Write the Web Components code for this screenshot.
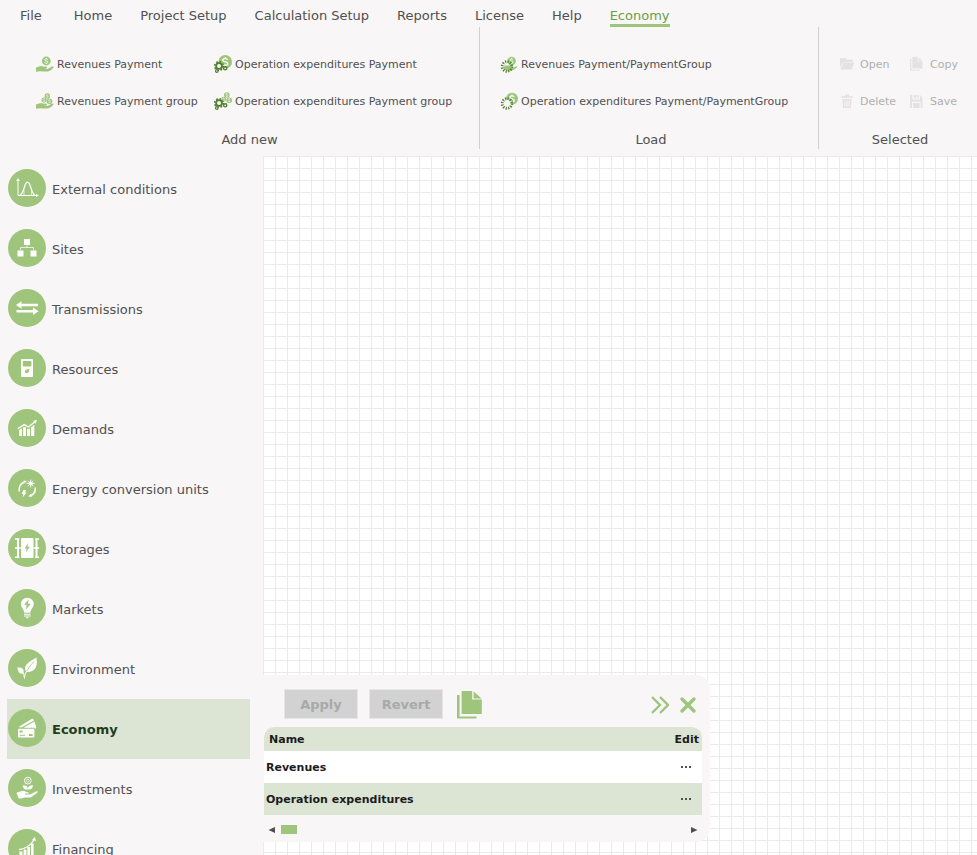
<!DOCTYPE html>
<html lang="en">
<head>
<meta charset="utf-8">
<meta name="viewport" content="width=device-width, initial-scale=1">
<title>Economy</title>
<style>
  :root {
    --bg: #f8f6f7;
    --green: #9fc57c;
    --dark-green: #4f7f2b;
    --pale-green: #dce5d3;
    --text: #505050;
    --line: #cfcfcf;
  }
  body {
    margin: 0;
    height: 100vh;
    display: flex;
    flex-direction: column;
    overflow: hidden;
    background: var(--bg);
    color: var(--text);
    font: 13px/18px Verdana, "DejaVu Sans", sans-serif;
  }
  header {
    flex: none;
    padding-bottom: 7px;
  }
  main {
    flex: 1;
    min-height: 0;
    display: flex;
  }
</style>
</head>
<body>
  <header>
    <menu-bar>
      <menu-item>File</menu-item>
      <menu-item>Home</menu-item>
      <menu-item>Project Setup</menu-item>
      <menu-item>Calculation Setup</menu-item>
      <menu-item>Reports</menu-item>
      <menu-item>License</menu-item>
      <menu-item>Help</menu-item>
      <menu-item active>Economy</menu-item>
    </menu-bar>
    <ribbon-bar>
      <ribbon-group caption="Add new" style="flex-grow: 459; --columns: 178px 1fr">
        <ribbon-button icon="revenue">Revenues Payment</ribbon-button>
        <ribbon-button icon="expense">Operation expenditures Payment</ribbon-button>
        <ribbon-button icon="revenue-group">Revenues Payment group</ribbon-button>
        <ribbon-button icon="expense-group">Operation expenditures Payment group</ribbon-button>
      </ribbon-group>
      <ribbon-group caption="Load" style="flex-grow: 334; --columns: 1fr">
        <ribbon-button icon="load-revenue">Revenues Payment/PaymentGroup</ribbon-button>
        <ribbon-button icon="load-expense">Operation expenditures Payment/PaymentGroup</ribbon-button>
      </ribbon-group>
      <ribbon-group caption="Selected" style="flex-grow: 154; --columns: 70px 1fr">
        <ribbon-button icon="open" disabled>Open</ribbon-button>
        <ribbon-button icon="copy" disabled>Copy</ribbon-button>
        <ribbon-button icon="delete" disabled>Delete</ribbon-button>
        <ribbon-button icon="save" disabled>Save</ribbon-button>
      </ribbon-group>
    </ribbon-bar>
  </header>
  <main>
    <side-nav>
      <nav-item icon="conditions">External conditions</nav-item>
      <nav-item icon="sites">Sites</nav-item>
      <nav-item icon="transmissions">Transmissions</nav-item>
      <nav-item icon="resources">Resources</nav-item>
      <nav-item icon="demands">Demands</nav-item>
      <nav-item icon="conversion">Energy conversion units</nav-item>
      <nav-item icon="storages">Storages</nav-item>
      <nav-item icon="markets">Markets</nav-item>
      <nav-item icon="environment">Environment</nav-item>
      <nav-item icon="economy" active>Economy</nav-item>
      <nav-item icon="investments">Investments</nav-item>
      <nav-item icon="financing">Financing</nav-item>
    </side-nav>
    <grid-canvas>
      <payment-panel></payment-panel>
    </grid-canvas>
  </main>

<script>
  const hand = 'M0 12.5 L3 11.5 Q5 10.6 7 11.5 L10.5 11.8 Q11.8 12.6 10.5 13.4 L7.5 13.6 L11.5 14 L16 11.6 Q17.8 11 17.8 12.2 Q16 15 12 16.6 H7 Q4 15.6 0 16.8Z';

  // round coin with a currency mark, sized by its radius
  const coin = (x, y, r) => `
    <g transform="translate(${x} ${y}) scale(${r / 6})">
      <circle r="6" fill="#9fc57c"/>
      <path d="M2.2 -1.9 Q1.6 -2.9 0 -2.9 Q-2.1 -2.9 -2.1 -1.5 Q-2.1 -.3 0 0 Q2.2 .3 2.2 1.6 Q2.2 3 0 3 Q-1.8 3 -2.3 1.9 M0 -4.3 V-2.9 M0 3 V4.3" fill="none" stroke="#fff" stroke-width="1.2"/>
    </g>`;

  const gears = `
    <g fill="none" stroke="#4f7f2b">
      <circle cx="5" cy="11" r="4.3" stroke-width="1.6" stroke-dasharray="1.7 1.67"/>
      <circle cx="5" cy="11" r="2.9" stroke-width="1.8" fill="#f8f6f7"/>
      <circle cx="11.2" cy="13.3" r="1.6" stroke-width="1.4" fill="#f8f6f7"/>
      <circle cx="2.8" cy="16" r="1.3" stroke-width="1.2" fill="#f8f6f7"/>
    </g>`;

  const spinner = '<circle cx="7" cy="11.5" r="4.8" fill="none" stroke="#4f7f2b" stroke-width="2.8" stroke-dasharray="1.2 1.31"/>';

  const page = `
    <path d="M0 4 H2.6 V25.4 H19.5 V27.4 H0Z"/>
    <path d="M4.6 0 H15.2 V8.6 H24.8 V23 H4.6Z"/>
    <path d="M16.6 .4 L24.6 7.4 H16.6Z"/>`;

  const ICONS = {
    'revenue': [18, 18, `<path d="${hand}" fill="#9fc57c"/>${coin(10.3, 6, 4.4)}`],
    'revenue-group': [18, 18, `<path d="${hand}" fill="#9fc57c"/>${coin(11.3, 4, 2.7)}${coin(8, 8, 2.5)}${coin(13.4, 9.2, 2.8)}`],
    'expense': [18, 18, coin(11.2, 6.9, 6.8) + gears],
    'expense-group': [18, 18, coin(12.8, 3, 2.8) + coin(9.8, 7.2, 2.4) + coin(15.2, 8.2, 2.8) + gears],
    'load-revenue': [18, 18, `${coin(11.6, 6, 4.2)}<path d="M4.5 10.5 H10 L12 13 L17.5 11 Q16.8 13.8 12 15.5 L8 16 L3.5 14Z" fill="#9fc57c"/>${spinner}`],
    'load-expense': [18, 18, `${coin(12, 6.8, 6)}<circle cx="7" cy="11.5" r="4.4" fill="#f8f6f7"/>${spinner}`],
    'open': [18, 18, '<path d="M1 4 Q1 3 2 3 H6.5 L8 4.8 H13 Q14 4.8 14 5.8 V7 H4.5 L1 12.5Z M4.6 7.6 H15.4 L12.8 14.6 H1.4Z"/>'],
    'copy': [18, 18, `<g transform="translate(1 2) scale(.5)">${page}</g>`],
    'delete': [18, 18, '<path d="M2.5 4 H6 V2.5 H10 V4 H13.5 V5.8 H2.5Z M3.3 7 H12.7 L12 16 H4Z"/><path d="M5.8 8.5 V14.5 M8 8.5 V14.5 M10.2 8.5 V14.5" stroke="#f8f6f7" stroke-width="1"/>'],
    'save': [18, 18, '<path d="M1 3 H3.5 V7.5 H11 V3 L13.5 5.5 V16 H11.6 V9.8 H3 V16 H1Z M5 3 H7.5 V6.2 H5Z M8.6 3 H10 V6.2 H8.6Z M4 11 H10.6 V16 H4Z"/>'],
    'page': [26, 28, page],
    'chevrons': [18, 18, '<path d="M1 1 L9 9 L1 17 M9 1 L17 9 L9 17" fill="none" stroke="#9fc57c" stroke-width="2.4"/>'],
    'close': [18, 18, '<path d="M3 3 L15 15 M15 3 L3 15" fill="none" stroke="#9fc57c" stroke-width="3.4" stroke-linecap="round"/>'],
    'dots': [12, 4, '<path d="M1 1 H3 V3 H1Z M5 1 H7 V3 H5Z M9 1 H11 V3 H9Z" fill="#505050"/>'],
    'left': [8, 8, '<path d="M7 1 V7 L.5 4Z" fill="#505050"/>'],
    'right': [8, 8, '<path d="M1 1 V7 L7.5 4Z" fill="#505050"/>'],
    'conditions': [38, 38, '<g fill="none" stroke="#fff"><path d="M10 12 V26.5 H29" stroke-width="1"/><path d="M11.5 26.5 C16.5 25 16 13.2 19.5 13.2 S22.8 25 27.5 26.5" stroke-width="1.3"/><path d="M16 21 V26 M23.5 21 V26" stroke-width=".7"/></g><path d="M10 9 L11.8 12 H8.2Z M31 26.5 L28 24.9 V28.1Z" fill="#fff"/>'],
    'sites': [38, 38, '<path d="M16 10 H22 V16 H16Z M9.5 21.5 H15.5 V27.5 H9.5Z M22.5 21.5 H28.5 V27.5 H22.5Z" fill="#fff"/><path d="M19 16 V18.5 M12.5 21 V18.5 H25.5 V21" fill="none" stroke="#fff" stroke-width=".7"/>'],
    'transmissions': [38, 38, '<path d="M8 16 L13.5 12.2 V14.8 H30 V17.2 H13.5 V19.8Z M30.5 22.2 L25 18.4 V21 H8.5 V23.4 H25 V26Z" fill="#fff"/>'],
    'resources': [38, 38, '<rect x="13" y="10" width="12" height="18" rx="1" fill="#fff"/><rect x="14.8" y="12" width="8.6" height="5.4" rx="1" fill="#9fc57c"/><path d="M21.3 20 Q17 20 17 22.6 Q17 24.4 18.8 24.2 Q21.3 24 21.3 20Z M16.6 24.6 L19 22.4" fill="#9fc57c"/>'],
    'demands': [38, 38, '<path d="M11 21 L14 19.2 V27 H11Z M15 18.6 L16.5 17.8 L18 18.8 V27 H15Z M19 19.4 L20.4 20.2 L22 19.2 V27 H19Z M23 18.4 L26.3 15.8 V27 H23Z" fill="#fff"/><path d="M9.8 19.6 L16.3 15.6 L20.4 18 L27 12.8" fill="none" stroke="#fff" stroke-width="1.3"/><path d="M28.8 11 L27.8 14.6 L25.2 11.8Z" fill="#fff"/>'],
    'conversion': [38, 38, '<g fill="none" stroke="#fff"><path d="M11.2 22.5 Q10.4 15.5 16.2 13" stroke-width="1.5"/><path d="M27.2 18.5 Q28 24.5 22.5 26.8" stroke-width="1.5"/><path d="M22.7 10.6 V18.4 M18.8 14.5 H26.6 M20 11.8 L25.4 17.2 M25.4 11.8 L20 17.2" stroke-width=".8"/></g><circle cx="22.7" cy="14.5" r="2.1" fill="#fff"/><path d="M18.8 12 L15.6 11.4 L16.8 14.6Z M20.2 27.4 L23 24.8 L24 27.8Z M15.4 21 H18.2 L17 23.6 H18.6 L14.6 28.4 L15.4 25 H13.6Z" fill="#fff"/>'],
    'storages': [38, 38, '<rect x="13" y="9" width="12.5" height="20" rx="1" fill="#fff"/><g fill="none" stroke="#fff"><path d="M7 10 H11.4 M7 19 H13 M7 28.2 H11.4 M31 10 H27.2 M31 19 H25.5 M31 28.2 H27.2" stroke-width="1.6"/><path d="M10 10 V28.4 M28.5 10 V28.4" stroke-width="2"/></g><path d="M20.4 13.8 L16.6 19.4 H18.8 L17.8 23.4 L21.8 17.8 H19.5Z" fill="#9fc57c"/>'],
    'markets': [38, 38, '<path d="M19.3 8.7 A6.4 6.4 0 0 1 25.7 15.1 C25.7 18.6 22.6 20 22.4 23.8 H16.2 C16 20 12.9 18.6 12.9 15.1 A6.4 6.4 0 0 1 19.3 8.7Z" fill="#fff"/><path d="M16 25.2 H22.6 M16 27 H22.6 M18 28.8 H20.6" stroke="#fff" stroke-width="1.1"/><path d="M20.6 10.6 L16 15.8 H18.6 L18 20.4 L22.8 14.8 H20Z" fill="#9fc57c"/>'],
    'environment': [38, 38, '<path d="M28.4 8.6 Q29.6 15.8 27.2 19.6 Q24.6 23.4 18.2 23 Q15.6 18.4 19.4 14.4 Q22.6 11.6 28.4 8.6Z M9.2 18.6 Q13.6 18.4 15 20 Q16.2 21.8 15.6 24.6 Q11.6 25.2 10.6 22.8Z" fill="#fff"/><path d="M26 12.4 Q22 16.6 18.6 22.2" fill="none" stroke="#9fc57c" stroke-width=".8"/><path d="M13 21.4 Q16.6 25 16.6 29.6 M18.8 22 Q16.6 25 16.6 28" fill="none" stroke="#fff" stroke-width="1"/>'],
    'economy': [38, 38, '<path d="M10.6 18 L24 9.8 Q25 9.4 25.4 10.4 L26 11.6 L13.4 18.4Z M15.4 18.8 L26.6 12.4 L28.2 18 Q28.4 19.2 27.4 19.8 L27 20 Q26.8 18.8 25.8 18.8Z" fill="#fff"/><rect x="10" y="19.8" width="16.4" height="8.8" rx="1" fill="#fff"/><path d="M11.6 21.4 H14.6 V23.4 H11.6Z M11.6 25.8 H17 V26.8 H11.6Z M21 25 H24.6 V27 H21Z" fill="#9fc57c"/>'],
    'investments': [38, 38, '<circle cx="19.8" cy="11.6" r="3.4" fill="none" stroke="#fff" stroke-width=".9"/><circle cx="19.8" cy="11.6" r="1.5" fill="none" stroke="#fff" stroke-width=".7"/><path d="M14.6 16.4 Q18.8 16 19.8 19.4 Q20.8 16 25 16.4 Q24.6 20.6 19.8 20.6 Q15 20.6 14.6 16.4Z M8.4 23.8 L12 22.6 L15.6 21.8 L19.2 23.2 Q21 23.2 21 24.6 H17 V25.4 H22 L28 22.4 Q30 22 29.6 23.6 L22.6 28.4 H16.6 L13.6 29.4 H10.8Z" fill="#fff"/>'],
    'financing': [38, 38, '<path d="M11.4 22.4 H14.4 V32 H11.4Z M15.6 20.6 H18.4 V32 H15.6Z M19.4 18 H22 V32 H19.4Z M23 14.6 H25.6 V32 H23Z" fill="#fff"/><path d="M11 20.6 Q22 18.6 26 10.4" fill="none" stroke="#fff" stroke-width="1.2"/><path d="M26.8 8 L28 12 L24 11Z" fill="#fff"/>']
  };

  class AppIcon extends HTMLElement {
    constructor() {
      super();
      this.attachShadow({mode: 'open'});
    }

    connectedCallback() {
      const [width, height, shape] = ICONS[this.getAttribute('name')];
      this.shadowRoot.innerHTML = `
        <style>
          :host { display: block; flex: none; color: var(--green); }
          svg { display: block; }
        </style>
        <svg width="${width}" height="${height}" viewBox="0 0 ${width} ${height}" fill="currentColor" aria-hidden="true">${shape}</svg>
      `;
    }
  }
  customElements.define('app-icon', AppIcon);

  class MenuBar extends HTMLElement {
    constructor() {
      super();
      this.attachShadow({mode: 'open'}).innerHTML = `
        <style>
          :host { display: block; padding: 0 20px; }
          nav { display: flex; gap: 28px; }
        </style>
        <nav aria-label="Main menu"><slot></slot></nav>
      `;
    }
  }
  customElements.define('menu-bar', MenuBar);

  class MenuItem extends HTMLElement {
    constructor() {
      super();
      this.attachShadow({mode: 'open'}).innerHTML = `
        <style>
          :host { display: block; }
          :host(:first-child) { margin-right: 4px; }
          a {
            display: block;
            padding-top: 8px;
            border-bottom: 3px solid transparent;
            color: inherit;
            line-height: 16px;
            text-decoration: none;
            white-space: nowrap;
          }
          :host([active]) a { color: #6ba03e; border-color: var(--green); }
        </style>
        <a href="#"><slot></slot></a>
      `;
    }
  }
  customElements.define('menu-item', MenuItem);

  class RibbonBar extends HTMLElement {
    constructor() {
      super();
      this.attachShadow({mode: 'open'}).innerHTML = `
        <style>
          :host { display: flex; padding-left: 16px; }
          ::slotted(ribbon-group:not(:last-child)) { border-right: 1px solid var(--line); }
        </style>
        <slot></slot>
      `;
    }
  }
  customElements.define('ribbon-bar', RibbonBar);

  class RibbonGroup extends HTMLElement {
    constructor() {
      super();
      this.attachShadow({mode: 'open'});
    }

    connectedCallback() {
      this.shadowRoot.innerHTML = `
        <style>
          :host {
            display: block;
            box-sizing: border-box;
            flex: 1 1 0;
            min-width: 0;
            padding-left: 4px;
          }
          .buttons {
            display: grid;
            grid-template-columns: var(--columns);
            grid-auto-rows: 37px;
            align-items: center;
            padding: 18px 0 0 16px;
          }
          .caption { padding-top: 12px; text-align: center; }
        </style>
        <div class="buttons"><slot></slot></div>
        <div class="caption">${this.getAttribute('caption')}</div>
      `;
    }
  }
  customElements.define('ribbon-group', RibbonGroup);

  class RibbonButton extends HTMLElement {
    constructor() {
      super();
      this.attachShadow({mode: 'open'});
    }

    connectedCallback() {
      const disabled = this.hasAttribute('disabled');
      this.shadowRoot.innerHTML = `
        <style>
          :host { display: block; min-width: 0; }
          button {
            display: flex;
            align-items: center;
            gap: 3px;
            padding: 0;
            border: 0;
            background: none;
            color: inherit;
            font: inherit;
            font-size: 11px;
            white-space: nowrap;
            cursor: pointer;
          }
          span { padding-top: 2px; }
          button:disabled { color: #b0b0b0; cursor: default; }
          button:disabled app-icon { color: #e4e2e3; }
        </style>
        <button type="button" ${disabled ? 'disabled' : ''}>
          <app-icon name="${this.getAttribute('icon')}"></app-icon>
          <span><slot></slot></span>
        </button>
      `;
    }
  }
  customElements.define('ribbon-button', RibbonButton);

  class SideNav extends HTMLElement {
    constructor() {
      super();
      this.attachShadow({mode: 'open'}).innerHTML = `
        <style>
          :host {
            display: block;
            flex: none;
            box-sizing: border-box;
            width: 263px;
            padding: 3px 13px 0 7px;
            overflow: hidden;
          }
        </style>
        <nav aria-label="Project sections"><slot></slot></nav>
      `;
    }
  }
  customElements.define('side-nav', SideNav);

  class NavItem extends HTMLElement {
    constructor() {
      super();
      this.attachShadow({mode: 'open'});
    }

    connectedCallback() {
      this.shadowRoot.innerHTML = `
        <style>
          :host { display: block; }
          a {
            display: flex;
            align-items: center;
            gap: 6px;
            box-sizing: border-box;
            height: 60px;
            padding: 0 0 2px 1px;
            color: inherit;
            text-decoration: none;
          }
          span { padding-top: 4px; }
          app-icon { border-radius: 50%; background: var(--green); }
          :host([active]) a { background: var(--pale-green); color: #1f3d1f; font-weight: bold; }
        </style>
        <a href="#">
          <app-icon name="${this.getAttribute('icon')}"></app-icon>
          <span><slot></slot></span>
        </a>
      `;
    }
  }
  customElements.define('nav-item', NavItem);

  class GridCanvas extends HTMLElement {
    constructor() {
      super();
      this.attachShadow({mode: 'open'}).innerHTML = `
        <style>
          :host {
            display: block;
            position: relative;
            flex: 1;
            min-width: 0;
            background:
              linear-gradient(#ebebeb 1px, transparent 1px) 0 0 / 12px 12px,
              linear-gradient(90deg, #ebebeb 1px, transparent 1px) 0 0 / 12px 12px,
              #fff;
          }
          /* the panel floats over the drawing area */
          ::slotted(payment-panel) { position: absolute; left: 0; bottom: 13px; }
        </style>
        <slot></slot>
      `;
    }
  }
  customElements.define('grid-canvas', GridCanvas);

  class PaymentPanel extends HTMLElement {
    constructor() {
      super();
      this.attachShadow({mode: 'open'}).innerHTML = `
        <style>
          :host {
            display: block;
            box-sizing: border-box;
            width: 447px;
            padding: 14px 8px 0 1px;
            border-radius: 0 14px 14px 0;
            background: var(--bg);
          }
          button { padding: 0; border: 0; background: none; font: inherit; cursor: pointer; }
          .toolbar {
            display: flex;
            align-items: center;
            gap: 14px;
            padding: 0 5px 8px 20px;
          }
          .toolbar button { padding-top: 2px; }
          .actions { display: flex; gap: 11px; }
          .toolbar .action {
            width: 74px;
            height: 30px;
            border: 1px solid #e6e6e6;
            background: #d2d2d2;
            color: #a9a9a9;
            font-weight: bold;
            cursor: default;
          }
          .window { display: flex; gap: 10px; margin-left: auto; }
          table {
            width: 100%;
            border-collapse: collapse;
            background: #fff;
            color: #1c1c1c;
            font-size: 11px;
            font-weight: bold;
            border-radius: 10px 10px 0 0;
            overflow: hidden;
          }
          th, td { box-sizing: border-box; padding: 2px 2px 0; text-align: left; }
          th { height: 24px; padding: 2px 3px 0 5px; }
          td { height: 32px; }
          th:last-child { text-align: right; }
          td:last-child { padding: 0 10px 0 0; }
          td button { display: block; margin-left: auto; }
          thead tr, tbody tr:nth-child(even) { background: var(--pale-green); }
          .scroll {
            display: flex;
            align-items: center;
            gap: 5px;
            box-sizing: border-box;
            height: 27px;
            padding: 2px 4px 0;
          }
          .track { flex: 1; }
          .thumb { width: 16px; height: 9px; background: var(--green); }
        </style>
        <div class="toolbar">
          <div class="actions">
            <button type="button" class="action" disabled>Apply</button>
            <button type="button" class="action" disabled>Revert</button>
          </div>
          <button type="button" aria-label="Copy"><app-icon name="page"></app-icon></button>
          <div class="window">
            <button type="button" aria-label="Expand"><app-icon name="chevrons"></app-icon></button>
            <button type="button" aria-label="Close"><app-icon name="close"></app-icon></button>
          </div>
        </div>
        <table>
          <thead>
            <tr><th>Name</th><th>Edit</th></tr>
          </thead>
          <tbody>
            <tr>
              <td>Revenues</td>
              <td><button type="button" aria-label="Edit Revenues"><app-icon name="dots"></app-icon></button></td>
            </tr>
            <tr>
              <td>Operation expenditures</td>
              <td><button type="button" aria-label="Edit Operation expenditures"><app-icon name="dots"></app-icon></button></td>
            </tr>
          </tbody>
        </table>
        <div class="scroll">
          <button type="button" aria-label="Scroll left"><app-icon name="left"></app-icon></button>
          <div class="track"><div class="thumb"></div></div>
          <button type="button" aria-label="Scroll right"><app-icon name="right"></app-icon></button>
        </div>
      `;
    }
  }
  customElements.define('payment-panel', PaymentPanel);
</script>
</body>
</html>
